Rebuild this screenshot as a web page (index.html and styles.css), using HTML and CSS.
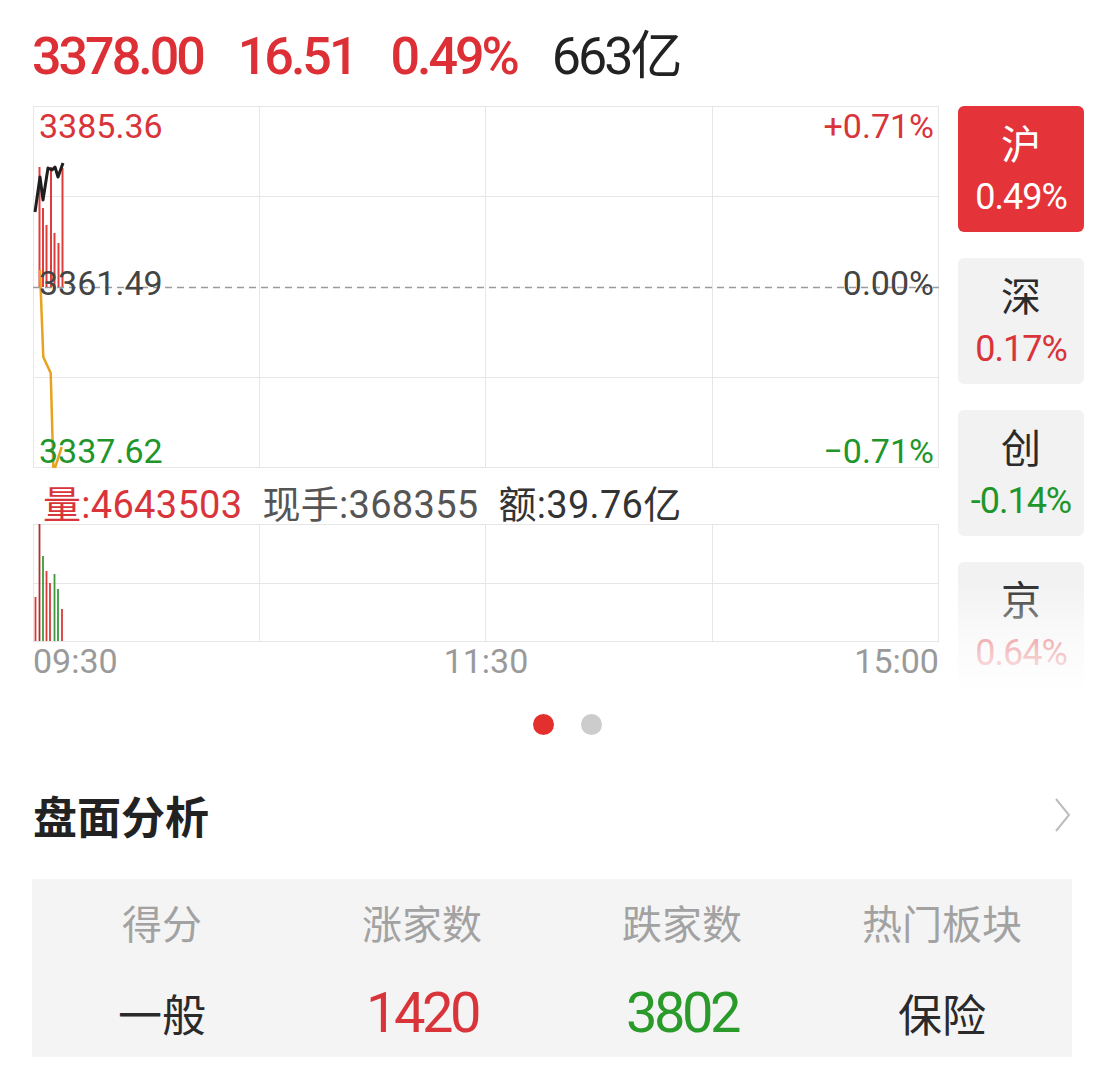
FILE: index.html
```html
<!DOCTYPE html>
<html lang="zh">
<head>
<meta charset="utf-8">
<link rel="stylesheet" href="styles.css">
</head>
<body>
<div class="page">
  <div class="quote">
    <span class="q-up">3378.00</span>
    <span class="q-up">16.51</span>
    <span class="q-up">0.49%</span>
    <span class="q-dark">663亿</span>
  </div>

  <div class="main">
    <div class="charts">
      <div class="price-chart">
        <svg class="grid" width="906" height="362" viewBox="0 0 906 362">
          <g stroke="#e6e6e6" stroke-width="1" fill="none">
            <line x1="0.5" y1="0" x2="0.5" y2="362"/>
            <line x1="226.5" y1="0" x2="226.5" y2="362"/>
            <line x1="452.5" y1="0" x2="452.5" y2="362"/>
            <line x1="679.5" y1="0" x2="679.5" y2="362"/>
            <line x1="905.5" y1="0" x2="905.5" y2="362"/>
            <line x1="0" y1="0.5" x2="906" y2="0.5"/>
            <line x1="0" y1="90.5" x2="906" y2="90.5"/>
            <line x1="0" y1="271.5" x2="906" y2="271.5"/>
            <line x1="0" y1="361.5" x2="906" y2="361.5"/>
          </g>
          <line x1="0" y1="181.5" x2="906" y2="181.5" stroke="#9a9a9a" stroke-width="1.5" stroke-dasharray="7 5"/>
          <g stroke="#e03c3c" stroke-width="2">
            <line x1="6.5" y1="61" x2="6.5" y2="181"/>
            <line x1="10" y1="102" x2="10" y2="181"/>
            <line x1="13.5" y1="119" x2="13.5" y2="181"/>
            <line x1="18" y1="61" x2="18" y2="181"/>
            <line x1="21.5" y1="127" x2="21.5" y2="181"/>
            <line x1="25.5" y1="137" x2="25.5" y2="181"/>
            <line x1="29.5" y1="62" x2="29.5" y2="181"/>
          </g>
          <polyline points="7,164 7.7,184 10.3,251 17.7,267 20.3,361 22,362 28.7,341" fill="none" stroke="#e8a21f" stroke-width="2.5" stroke-linejoin="round"/>
          <polyline points="2,106 7,71 10,94 15,62 19,64 22,61 25,71 30,57" fill="none" stroke="#1e1e1e" stroke-width="3" stroke-linejoin="round"/>
        </svg>
        <span class="lbl lbl-tl up">3385.36</span>
        <span class="lbl lbl-ml mid">3361.49</span>
        <span class="lbl lbl-bl down">3337.62</span>
        <span class="lbl lbl-tr up">+0.71%</span>
        <span class="lbl lbl-mr mid">0.00%</span>
        <span class="lbl lbl-br down">−0.71%</span>
      </div>

      <div class="vol-info">
        <span class="vi-red">量:4643503</span>
        <span class="vi-gray">现手:368355</span>
        <span class="vi-dark">额:39.76亿</span>
      </div>

      <div class="vol-chart">
        <svg width="906" height="118" viewBox="0 0 906 118">
          <g stroke="#e6e6e6" stroke-width="1" fill="none">
            <line x1="0.5" y1="0" x2="0.5" y2="118"/>
            <line x1="226.5" y1="0" x2="226.5" y2="118"/>
            <line x1="452.5" y1="0" x2="452.5" y2="118"/>
            <line x1="679.5" y1="0" x2="679.5" y2="118"/>
            <line x1="905.5" y1="0" x2="905.5" y2="118"/>
            <line x1="0" y1="0.5" x2="906" y2="0.5"/>
            <line x1="0" y1="59.5" x2="906" y2="59.5"/>
            <line x1="0" y1="117.5" x2="906" y2="117.5"/>
          </g>
          <g stroke-width="1.8">
            <line x1="2.5" y1="73" x2="2.5" y2="117" stroke="#d83a3a"/>
            <line x1="6.5" y1="0" x2="6.5" y2="117" stroke="#b02e2e"/>
            <line x1="10" y1="32" x2="10" y2="117" stroke="#3c9a3c"/>
            <line x1="13.5" y1="47" x2="13.5" y2="117" stroke="#d83a3a"/>
            <line x1="17" y1="59" x2="17" y2="117" stroke="#d83a3a"/>
            <line x1="21.5" y1="50" x2="21.5" y2="117" stroke="#3c9a3c"/>
            <line x1="25" y1="65" x2="25" y2="117" stroke="#3c9a3c"/>
            <line x1="29" y1="85" x2="29" y2="117" stroke="#d83a3a"/>
          </g>
        </svg>
      </div>

      <div class="times">
        <span>09:30</span>
        <span>11:30</span>
        <span>15:00</span>
      </div>
    </div>

    <div class="tabs">
      <div class="tab active">
        <span class="tab-name">沪</span>
        <span class="tab-val">0.49%</span>
      </div>
      <div class="tab">
        <span class="tab-name">深</span>
        <span class="tab-val up">0.17%</span>
      </div>
      <div class="tab">
        <span class="tab-name">创</span>
        <span class="tab-val down">-0.14%</span>
      </div>
      <div class="tab">
        <span class="tab-name">京</span>
        <span class="tab-val up">0.64%</span>
      </div>
    </div>
  </div>

  <div class="pager">
    <span class="dot dot-on"></span>
    <span class="dot"></span>
  </div>

  <div class="section-head">
    <h2 class="section-title">盘面分析</h2>
    <svg class="chevron" width="18" height="36" viewBox="0 0 18 36">
      <polyline points="2,2 15,18 2,34" fill="none" stroke="#bdbdbd" stroke-width="2"/>
    </svg>
  </div>

  <div class="stats">
    <div class="stat">
      <div class="stat-label">得分</div>
      <div class="stat-value"><span class="sv-cjk">一般</span></div>
    </div>
    <div class="stat">
      <div class="stat-label">涨家数</div>
      <div class="stat-value"><span class="sv-num up">1420</span></div>
    </div>
    <div class="stat">
      <div class="stat-label">跌家数</div>
      <div class="stat-value"><span class="sv-num down">3802</span></div>
    </div>
    <div class="stat">
      <div class="stat-label">热门板块</div>
      <div class="stat-value"><span class="sv-cjk">保险</span></div>
    </div>
  </div>
</div>
</body>
</html>
```

FILE: styles.css
```css
* { box-sizing: border-box; }
html, body { margin: 0; padding: 0; background: #fff; }
body {
  font-family: Roboto, "Noto Sans CJK SC", sans-serif;
  color: #333;
}
.page { width: 1104px; }

.up { color: #d8343a; }
.down { color: #1f962b; }
.mid { color: #444; }

/* quote header */
.quote {
  display: flex;
  gap: 35px;
  padding: 27px 0 0 32px;
  height: 87px;
  margin-bottom: 19px;
  font-size: 52px;
  line-height: 60px;
  font-weight: 500;
  letter-spacing: -3px;
  white-space: nowrap;
}
.q-up { color: #dc3036; }
.q-dark { color: #222; font-weight: 400; }

/* main block */
.main {
  display: flex;
  gap: 19px;
  margin-left: 33px;
  align-items: flex-start;
}
.charts { width: 906px; }

.price-chart {
  position: relative;
  width: 906px;
  height: 362px;
}
.price-chart svg, .vol-chart svg { display: block; }
.lbl {
  position: absolute;
  font-size: 34px;
  line-height: 34px;
  white-space: nowrap;
}
.lbl-tl { left: 6px; top: 3px; }
.lbl-ml { left: 6px; top: 160px; }
.lbl-bl { left: 6px; top: 328px; }
.lbl-tr { right: 5px; top: 3px; }
.lbl-mr { right: 5px; top: 160px; }
.lbl-br { right: 5px; top: 328px; }

.vol-info {
  height: 56px;
  padding: 18px 0 0 10px;
  display: flex;
  gap: 20px;
  font-size: 38px;
  line-height: 38px;
  letter-spacing: 0.3px;
  white-space: nowrap;
}
.vi-red { color: #d8343a; }
.vi-gray { color: #555; }
.vi-dark { color: #333; }

.vol-chart { height: 118px; }

.times {
  display: flex;
  justify-content: space-between;
  margin-top: 2px;
  font-size: 34px;
  line-height: 34px;
  color: #9a9a9a;
}

/* tabs */
.tabs {
  position: relative;
  width: 126px;
  display: flex;
  flex-direction: column;
  gap: 26px;
}
.tabs::after {
  content: "";
  position: absolute;
  left: 0;
  right: 0;
  bottom: 0;
  height: 105px;
  background: linear-gradient(to bottom, rgba(255,255,255,0) 0%, rgba(255,255,255,0.55) 45%, rgba(255,255,255,0.97) 100%);
}
.tab {
  height: 126px;
  border-radius: 6px;
  background: #f2f2f2;
  display: flex;
  flex-direction: column;
  align-items: center;
  padding-top: 16px;
}
.tab.active { background: #e5333a; }
.tab-name {
  font-family: "Noto Sans CJK SC", sans-serif;
  font-size: 40px;
  line-height: 40px;
  color: #2b2b2b;
}
.tab-val {
  margin-top: 17px;
  font-size: 36px;
  line-height: 36px;
  letter-spacing: -1px;
}
.tab.active .tab-name, .tab.active .tab-val { color: #fff; }

/* pager */
.pager {
  display: flex;
  justify-content: center;
  gap: 27px;
  margin-top: 26px;
  padding-left: 31px;
  height: 20px;
}
.dot {
  width: 21px;
  height: 21px;
  border-radius: 50%;
  background: #cccccc;
}
.dot-on { background: #e3302f; }

/* section header */
.section-head {
  display: flex;
  justify-content: space-between;
  align-items: center;
  height: 60px;
  margin-top: 51px;
  padding: 0 32px 0 33px;
}
.section-title {
  margin: 0;
  font-family: "Noto Sans CJK SC", sans-serif;
  font-size: 44px;
  line-height: 60px;
  font-weight: 700;
  color: #222;
}
.chevron { display: block; }

/* stats */
.stats {
  margin: 34px 32px 0 32px;
  height: 178px;
  background: #f4f4f4;
  display: grid;
  grid-template-columns: repeat(4, 1fr);
  padding-top: 18px;
}
.stat {
  display: flex;
  flex-direction: column;
  align-items: center;
}
.stat-label {
  font-family: "Noto Sans CJK SC", sans-serif;
  font-size: 40px;
  line-height: 50px;
  height: 50px;
  color: #a2a2a2;
}
.stat-value {
  margin-top: 34px;
  height: 64px;
  display: flex;
  align-items: center;
  justify-content: center;
}
.sv-cjk {
  font-family: "Noto Sans CJK SC", sans-serif;
  font-size: 44px;
  line-height: 1;
  color: #2a2a2a;
}
.sv-num {
  font-size: 56px;
  line-height: 1;
  letter-spacing: -3.5px;
}
.sv-num.up { color: #d8343a; }
.sv-num.down { color: #2a9a2a; }
```
